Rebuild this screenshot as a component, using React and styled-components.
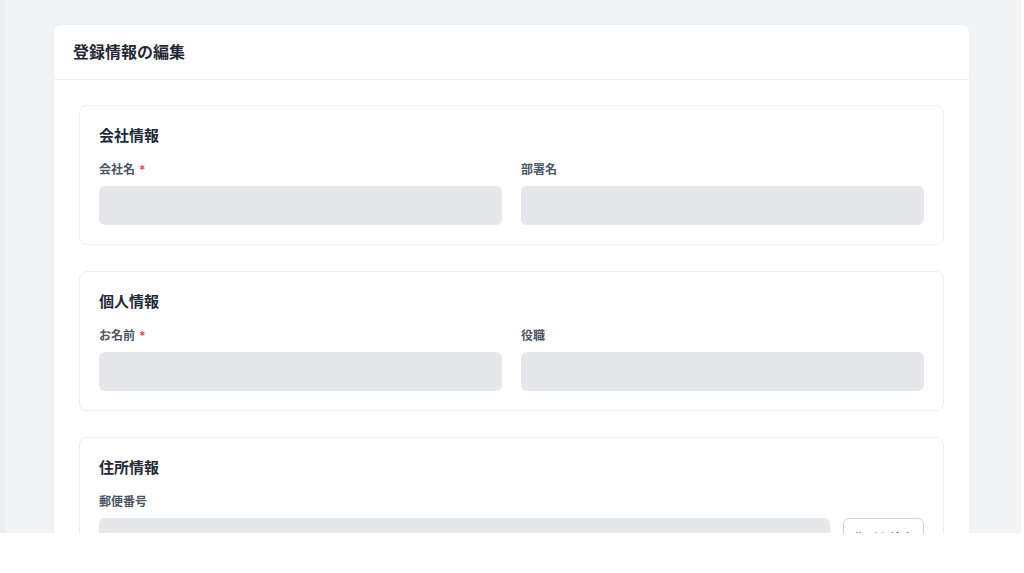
import React from "react";
import styled, { createGlobalStyle } from "styled-components";

const GlobalStyle = createGlobalStyle`
    html, body {
        margin: 0;
        padding: 0;
        background: #ffffff;
        font-family: Inter, "Noto Sans CJK JP", "Noto Sans", sans-serif;
        color: #1f2937;
    }
    * {
        box-sizing: border-box;
    }
`;

const Page = styled.div`
    height: 533px;
    margin-right: 3px;
    overflow: hidden;
    padding: 24px 51px 0 48px;
    background-color: #f3f4f6;
    border-left: 5px solid #eceef1;
`;

const Card = styled.div`
    background-color: #ffffff;
    border: 1px solid #eef0f2;
    border-radius: 8px;
`;

const CardHeader = styled.div`
    padding: 16px 19px;
    border-bottom: 1px solid #f0f1f3;
`;

const PageTitle = styled.h1`
    margin: 0;
    font-size: 16px;
    line-height: 22px;
    font-weight: 700;
    color: #1f2937;
`;

const CardBody = styled.div`
    display: flex;
    flex-direction: column;
    gap: 26px;
    padding: 25px 25px;
`;

const Section = styled.section`
    border: 1px solid #eceef1;
    border-radius: 8px;
    padding: 20px 19px 19px;
`;

const SectionTitle = styled.h2`
    margin: 0 0 16px;
    font-size: 15px;
    line-height: 20px;
    font-weight: 700;
    color: #1f2937;
`;

const Grid = styled.div`
    display: grid;
    grid-template-columns: ${props => props.cols || "1fr 1fr"};
    gap: 19px;
`;

const Field = styled.div`
    display: flex;
    flex-direction: column;
`;

const Label = styled.label`
    font-size: 12px;
    line-height: 16px;
    font-weight: 600;
    color: #4b5563;
    margin-bottom: 8px;
`;

const Required = styled.span`
    color: #ef4444;
    margin-left: 4px;
`;

const Input = styled.input`
    height: 39px;
    border: none;
    border-radius: 6px;
    background-color: #e5e7eb;
    padding: 0 12px;
    font-size: 13px;
    font-family: inherit;
    color: #1f2937;
    outline: none;
    &::placeholder {
        color: #9ca3af;
    }
`;

const InputRow = styled.div`
    display: flex;
    gap: 13px;
    align-items: center;
`;

const Grow = styled(Input)`
    flex: 1;
`;

const Button = styled.button`
    width: 81px;
    height: 39px;
    background: #ffffff;
    border: 1px solid #d1d5db;
    border-radius: 6px;
    font-family: inherit;
    font-size: 12px;
    font-weight: 500;
    color: #4b5563;
    padding: 0;
`;

const TextField = ({ label, required, placeholder }) => (
    <Field>
        <Label>
            {label}
            {required && <Required>*</Required>}
        </Label>
        <Input placeholder={placeholder} />
    </Field>
);

export default function App() {
    return (
        <>
            <GlobalStyle />
            <Page>
                <Card>
                    <CardHeader>
                        <PageTitle>登録情報の編集</PageTitle>
                    </CardHeader>
                    <CardBody>
                        <Section>
                            <SectionTitle>会社情報</SectionTitle>
                            <Grid>
                                <TextField label="会社名" required />
                                <TextField label="部署名" />
                            </Grid>
                        </Section>
                        <Section>
                            <SectionTitle>個人情報</SectionTitle>
                            <Grid>
                                <TextField label="お名前" required />
                                <TextField label="役職" />
                            </Grid>
                        </Section>
                        <Section>
                            <SectionTitle>住所情報</SectionTitle>
                            <Field>
                                <Label>郵便番号</Label>
                                <InputRow>
                                    <Grow placeholder="100-0005" />
                                    <Button>住所を検索</Button>
                                </InputRow>
                            </Field>
                        </Section>
                    </CardBody>
                </Card>
            </Page>
        </>
    );
}
